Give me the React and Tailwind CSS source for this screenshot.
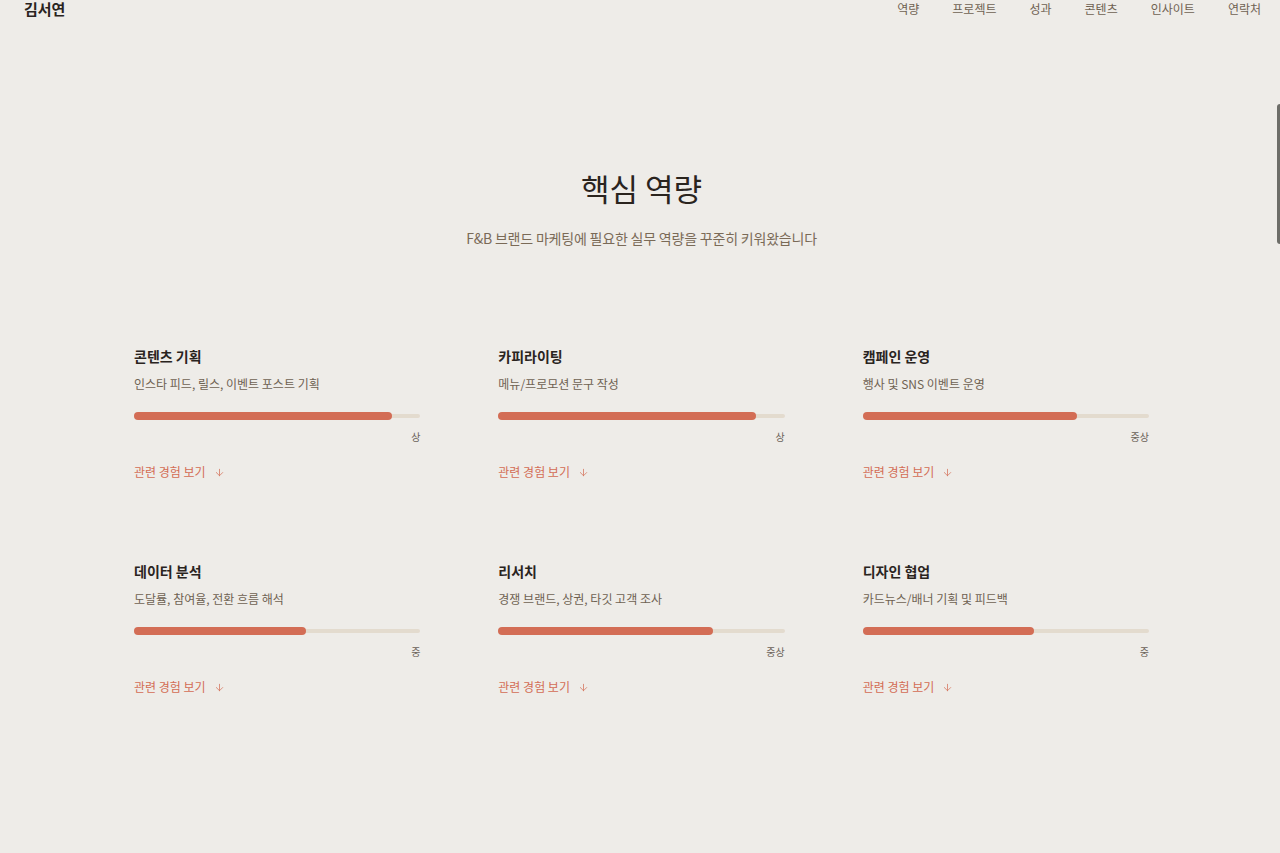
import React from "react";
import { ArrowDown } from "lucide-react";

const skills = [
  { title: "콘텐츠 기획", desc: "인스타 피드, 릴스, 이벤트 포스트 기획", pct: 90, level: "상" },
  { title: "카피라이팅", desc: "메뉴/프로모션 문구 작성", pct: 90, level: "상" },
  { title: "캠페인 운영", desc: "행사 및 SNS 이벤트 운영", pct: 75, level: "중상" },
  { title: "데이터 분석", desc: "도달률, 참여율, 전환 흐름 해석", pct: 60, level: "중" },
  { title: "리서치", desc: "경쟁 브랜드, 상권, 타깃 고객 조사", pct: 75, level: "중상" },
  { title: "디자인 협업", desc: "카드뉴스/배너 기획 및 피드백", pct: 60, level: "중" },
];

const nav = ["역량", "프로젝트", "성과", "콘텐츠", "인사이트", "연락처"];

function Card({ s }) {
  return (
    <div className="flex flex-col">
      <h3 className="text-[14px] font-bold leading-[20px] text-[#2a241e]">{s.title}</h3>
      <p className="mt-[9px] text-[12px] leading-[18px] text-[#6f6252]">{s.desc}</p>
      <div className="mt-[19px] relative h-[8px] w-full flex items-center">
        <div className="absolute left-0 right-0 h-[4px] rounded-full bg-[#e3dbce]" />
        <div
          className="relative h-[8px] rounded-full bg-[#d36d55]"
          style={{ width: `${s.pct}%` }}
        />
      </div>
      <div className="mt-[10px] text-right text-[10px] leading-[14px] text-[#6b6259]">{s.level}</div>
      <a className="mt-[19px] flex items-center gap-[8px] text-[12px] leading-[18px] text-[#d36d55]">
        관련 경험 보기
        <ArrowDown size={11} strokeWidth={1.6} />
      </a>
    </div>
  );
}

export default function App() {
  return (
    <div
      className="relative min-h-[853px] w-full bg-[#eeece8]"
      style={{ fontFamily: '"Noto Sans CJK KR", "Noto Sans", sans-serif' }}
    >
      <header className="flex h-[18px] items-center justify-between pl-[24px] pr-[19px]">
        <div className="text-[15px] font-bold leading-[18px] text-[#2a241e]">김서연</div>
        <nav className="flex items-center gap-[33px] text-[12px] leading-[18px] text-[#6f6252]">
          {nav.map((n) => (
            <span key={n}>{n}</span>
          ))}
        </nav>
      </header>

      <section className="mx-auto w-[1018px] pl-[3px] pt-[150px]">
        <h2 className="text-center text-[31px] font-normal leading-[40px] text-[#2a241e]">핵심 역량</h2>
        <p className="mt-[19px] text-center text-[14px] leading-[22px] tracking-[-0.2px] text-[#7a6a57]">
          F&amp;B 브랜드 마케팅에 필요한 실무 역량을 꾸준히 키워왔습니다
        </p>
        <div className="mt-[97px] grid grid-cols-3 gap-x-[78px] gap-y-[80px]">
          {skills.map((s) => (
            <Card key={s.title} s={s} />
          ))}
        </div>
      </section>

      <div className="absolute right-0 top-[104px] h-[140px] w-[3px] rounded-l-full bg-[#6d6d68]" />
    </div>
  );
}
